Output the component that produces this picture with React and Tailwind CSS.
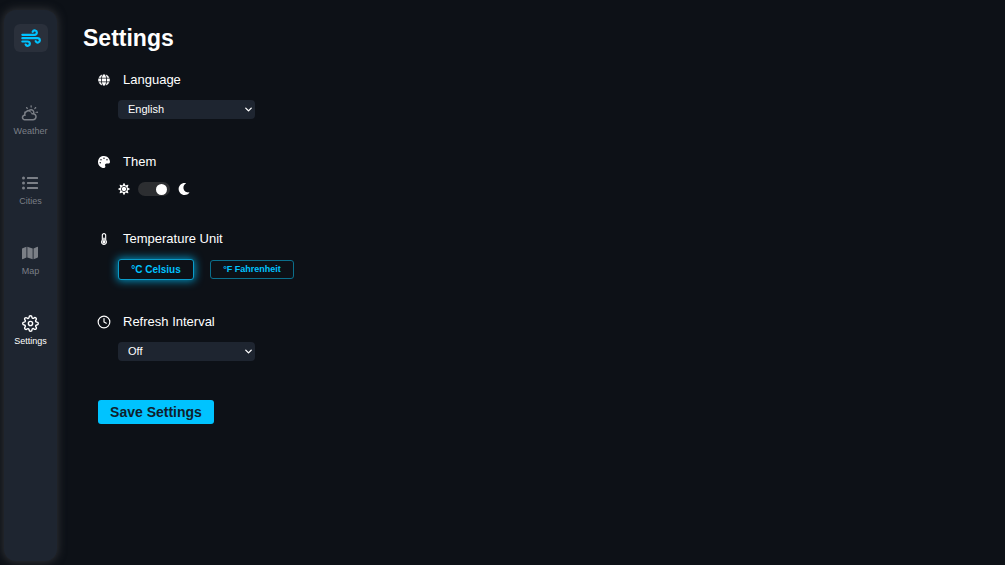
import React, { useState } from 'react';
import { TiWeatherPartlySunny } from 'react-icons/ti';
import { FaListUl, FaMap, FaGlobe, FaPalette, FaSun, FaMoon, FaThermometerHalf } from 'react-icons/fa';
import { FiSettings, FiClock, FiChevronDown } from 'react-icons/fi';

const navItems = [
  { name: 'Weather', Icon: TiWeatherPartlySunny, size: 18 },
  { name: 'Cities', Icon: FaListUl, size: 16 },
  { name: 'Map', Icon: FaMap, size: 16 },
  { name: 'Settings', Icon: FiSettings, size: 17 },
];

function WindLogo() {
  return (
    <svg
      width="20"
      height="18"
      viewBox="0 0 60 54"
      fill="none"
      stroke="#00c3ff"
      strokeWidth="6.5"
      strokeLinecap="round"
    >
      <path d="M4 17.5H41a6.5 6.5 0 1 0-6-9" />
      <path d="M4 27.5H50a6.5 6.5 0 1 1-6 9" />
      <path d="M4 37.5H20a6.5 6.5 0 1 1-6 9" />
    </svg>
  );
}

function Sidebar({ active }) {
  return (
    <aside className="ml-1 flex w-[53px] shrink-0 flex-col items-center rounded-xl bg-[#1e2530] pt-[14px] shadow-[0_0_8px_1px_#303236]">
      <div className="flex h-7 w-[34px] items-center justify-center rounded-md bg-[#2a303b]">
        <WindLogo />
      </div>
      <nav className="mt-[52px] flex flex-col gap-[38px]">
        {navItems.map(({ name, Icon, size }) => (
          <a
            key={name}
            href={`#${name.toLowerCase()}`}
            className={`flex h-8 flex-col items-center justify-between text-[9px] leading-[10px] ${
              active === name ? 'font-medium text-white' : 'text-[#7b7f86]'
            }`}
          >
            <span className="flex h-[18px] items-center">
              <Icon size={size} />
            </span>
            {name}
          </a>
        ))}
      </nav>
    </aside>
  );
}

function Section({ Icon, size, title, htmlFor, children }) {
  return (
    <section>
      <div className="flex h-4 items-center gap-[13px]">
        <span className="flex w-3 justify-center">
          <Icon size={size} className="shrink-0" />
        </span>
        {htmlFor ? (
          <label htmlFor={htmlFor} className="text-[13px] leading-4">{title}</label>
        ) : (
          <h2 className="text-[13px] leading-4">{title}</h2>
        )}
      </div>
      {children}
    </section>
  );
}

function Select({ id, value, onChange, options }) {
  return (
    <div className="relative mt-3 ml-5 w-[137px]">
      <select
        id={id}
        value={value}
        onChange={(e) => onChange(e.target.value)}
        className="block h-[19px] w-full appearance-none rounded bg-[#1e2530] pr-5 pl-[10px] text-[11px] leading-[19px] text-white"
      >
        {options.map((option) => (
          <option key={option}>{option}</option>
        ))}
      </select>
      <FiChevronDown size={11} strokeWidth={3} className="pointer-events-none absolute top-1 right-px" />
    </div>
  );
}

function App() {
  const [language, setLanguage] = useState('English');
  const [dark, setDark] = useState(true);
  const [unit, setUnit] = useState('celsius');
  const [interval, setRefreshInterval] = useState('Off');

  // the selected unit is a little bigger and glows
  const unitClass = (name) =>
    unit === name
      ? 'h-[21px] w-[76px] text-[10px] border-[#0a9cc9] shadow-[0_0_8px_1px_#0092c0]'
      : 'h-[19px] w-[84px] text-[9px] border-[#0b6f8c]';

  return (
    <div className="flex min-h-screen bg-[#0d1117] pt-[10px] pb-1 font-['Liberation_Sans',Arial,sans-serif] text-white">
      <Sidebar active="Settings" />
      <main className="flex-1 pt-[15px] pl-[26px]">
        <h1 className="text-[23px] leading-[26px] font-bold">Settings</h1>

        <form className="mt-[21px] pl-[15px]" onSubmit={(e) => e.preventDefault()}>
          <Section Icon={FaGlobe} size={12} title="Language" htmlFor="language">
            <Select
              id="language"
              value={language}
              onChange={setLanguage}
              options={['English', 'Arabic', 'French']}
            />
          </Section>

          <div className="mt-[35px]">
            <Section Icon={FaPalette} size={12} title="Them">
              <div className="mt-3 ml-5 flex h-[14px] items-center gap-2">
                <FaSun size={12} />
                <label className="flex">
                  <input
                    type="checkbox"
                    aria-label="Dark mode"
                    className="peer sr-only"
                    checked={dark}
                    onChange={() => setDark(!dark)}
                  />
                  <span className="flex h-[14px] w-8 items-center rounded-full bg-[#2c2e31] px-[3px] peer-checked:justify-end">
                    <span className="size-[11px] rounded-full bg-white" />
                  </span>
                </label>
                <FaMoon size={12} />
              </div>
            </Section>
          </div>

          <div className="mt-[35px]">
            <Section Icon={FaThermometerHalf} size={12} title="Temperature Unit">
              <div className="mt-3 ml-5 flex items-center gap-4">
                <button
                  type="button"
                  onClick={() => setUnit('celsius')}
                  className={`rounded-[3px] border bg-[#0d1117] font-bold text-[#00c3ff] ${unitClass('celsius')}`}
                >
                  °C Celsius
                </button>
                <button
                  type="button"
                  onClick={() => setUnit('fahrenheit')}
                  className={`rounded-[3px] border bg-[#0d1117] font-bold text-[#00c3ff] ${unitClass('fahrenheit')}`}
                >
                  °F Fahrenheit
                </button>
              </div>
            </Section>
          </div>

          <div className="mt-[34px]">
            <Section Icon={FiClock} size={14} title="Refresh Interval" htmlFor="interval">
              <Select
                id="interval"
                value={interval}
                onChange={setRefreshInterval}
                options={['Off', '5 min', '15 min', '30 min']}
              />
            </Section>
          </div>

          <button
            type="submit"
            className="mt-[39px] h-6 w-[116px] rounded-[3px] bg-[#00c3ff] text-[14px] leading-6 font-bold text-[#10202b]"
          >
            Save Settings
          </button>
        </form>
      </main>
    </div>
  );
}

export default App;
